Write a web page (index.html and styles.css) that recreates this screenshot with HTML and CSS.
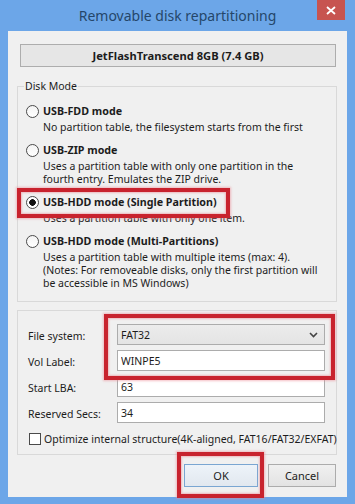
FILE: index.html
```html
<!DOCTYPE html>
<html lang="en">
  <head>
    <meta charset="UTF-8" />
    <meta name="viewport" content="width=device-width, initial-scale=1.0" />
    <title>Removable disk repartitioning</title>
    <link rel="stylesheet" href="styles.css">
  </head>
  <body>
    <div class="window">
      <div class="titlebar">
        <div class="title">Removable disk repartitioning</div>
        <button class="close" aria-label="Close">
          <svg width="10" height="9" viewBox="0 0 10 9">
            <path d="M1 1 L9 8 M9 1 L1 8" stroke="#fff" stroke-width="1.8" fill="none" />
          </svg>
        </button>
      </div>

      <div class="client">
        <div class="device">JetFlashTranscend 8GB (7.4 GB)</div>

        <fieldset class="group modes">
          <legend>Disk Mode</legend>
          <div class="option">
            <label class="radio"><input type="radio" name="mode" /> USB-FDD mode</label>
            <p class="desc">No partition table, the filesystem starts from the first</p>
          </div>
          <div class="option">
            <label class="radio"><input type="radio" name="mode" /> USB-ZIP mode</label>
            <p class="desc">Uses a partition table with only one partition in the<br />fourth entry. Emulates the ZIP drive.</p>
          </div>
          <div class="option">
            <label class="radio"><input type="radio" name="mode" checked /> USB-HDD mode (Single Partition)</label>
            <p class="desc">Uses a partition table with only one item.</p>
          </div>
          <div class="option">
            <label class="radio"><input type="radio" name="mode" /> USB-HDD mode (Multi-Partitions)</label>
            <p class="desc">Uses a partition table with multiple items (max: 4).<br />(Notes: For removeable disks, only the first partition will<br />be accessible in MS Windows)</p>
          </div>
        </fieldset>

        <fieldset class="group params">
          <div class="field">
            <label>File system:</label>
            <div class="select">
              <span>FAT32</span>
              <svg width="9" height="6" viewBox="0 0 9 6">
                <path d="M1 1 L4.5 4.5 L8 1" stroke="#444" stroke-width="1.6" fill="none" />
              </svg>
            </div>
          </div>
          <div class="field">
            <label>Vol Label:</label>
            <input type="text" value="WINPE5" />
          </div>
          <div class="field">
            <label>Start LBA:</label>
            <input type="text" value="63" />
          </div>
          <div class="field">
            <label>Reserved Secs:</label>
            <input type="text" value="34" />
          </div>
          <label class="check"><input type="checkbox" /> Optimize internal structure(4K-aligned, FAT16/FAT32/EXFAT)</label>
        </fieldset>

        <div class="actions">
          <button class="btn default">OK</button>
          <button class="btn cancel">Cancel</button>
        </div>

        <!-- red highlight marks drawn over the dialog -->
        <div class="mark mark-mode"></div>
        <div class="mark mark-fs"></div>
        <div class="mark mark-ok"></div>
      </div>
    </div>
  </body>
</html>
```
FILE: styles.css
```css
* {
  box-sizing: border-box;
}

body {
  margin: 0;
  font-family: "Noto Sans", "Open Sans", sans-serif;
  font-size: 10.5px;
  color: #1c1c1c;
  background-color: #6ca6e8;
}

.window {
  width: 355px;
  height: 504px;
  display: flex;
  flex-direction: column;
  background-color: #6ca6e8;
}

.titlebar {
  height: 31px;
  display: grid;
  grid-template-columns: 1fr auto 1fr;
  align-items: start;
}

.title {
  grid-column: 2;
  font-size: 14px;
  line-height: 31px;
  color: #25466a;
  white-space: nowrap;
}

.close {
  grid-column: 3;
  justify-self: end;
  margin-right: 10px;
  width: 28px;
  height: 20px;
  border: none;
  padding: 0;
  background-color: #c75450;
  display: flex;
  align-items: center;
  justify-content: center;
}

.client {
  position: relative;
  flex: 1;
  margin: 0 8px 7px 8px;
  padding: 13px 10px 0 9px;
  background-color: #f0f0f0;
}

.device {
  margin-left: 3px;
  width: 316px;
  height: 23px;
  border: 1px solid #adadad;
  background-color: #e6e6e6;
  font-size: 11.2px;
  font-weight: 700;
  line-height: 21px;
  text-align: center;
}

.group {
  margin: 0;
  border: 1px solid #d9d9d9;
  min-width: 0;
}

.modes {
  margin-top: 12px;
  padding: 10px 12px 11px 8px;
}

.modes legend {
  margin-left: -2px;
  padding: 0 1px;
  line-height: 14px;
}

.option + .option {
  margin-top: 8px;
}

.radio {
  display: flex;
  align-items: center;
  gap: 4px;
  height: 16px;
  font-weight: 700;
  font-size: 10.7px;
  white-space: nowrap;
}

.radio input {
  appearance: none;
  flex-shrink: 0;
  margin: 0;
  width: 13px;
  height: 13px;
  border: 1px solid #4a4a4a;
  border-radius: 50%;
  background: linear-gradient(#f4f4f4, #ffffff);
}

.radio input:checked {
  background: radial-gradient(circle, #111 0 3px, #fff 3.6px);
}

.desc {
  margin: 2px 0 0 17px;
  line-height: 13px;
  white-space: nowrap;
}

.params {
  margin-top: 8px;
  padding: 13px 11px 6px 10px;
}

.field {
  display: grid;
  grid-template-columns: 89px 208px;
  align-items: center;
  height: 21px;
}

.field + .field {
  margin-top: 5px;
}

.field label {
  padding-top: 2px;
}

.field input,
.select {
  height: 21px;
  margin: 0;
  padding: 0 3px;
  font: inherit;
  color: inherit;
  border: 1px solid #acacac;
}

.field input {
  background-color: #fff;
}

.select {
  display: flex;
  align-items: center;
  justify-content: space-between;
  padding-right: 6px;
  background: linear-gradient(#ececec, #e4e4e4);
}

.check {
  display: flex;
  align-items: center;
  gap: 3px;
  margin-top: 7px;
  margin-left: 1px;
  height: 18px;
  white-space: nowrap;
}

.check input {
  appearance: none;
  flex-shrink: 0;
  margin: 0;
  width: 12px;
  height: 12px;
  border: 1px solid #4a4a4a;
  background-color: #fff;
}

.actions {
  display: flex;
  justify-content: flex-end;
  gap: 10px;
  margin-top: 9px;
  margin-right: 1px;
}

.btn {
  height: 23px;
  padding: 0;
  font: inherit;
  font-size: 11px;
  color: inherit;
  border: 1px solid #acacac;
  background: linear-gradient(#f0f0f0, #e3e3e3);
}

.btn.default {
  width: 74px;
  border-color: #7aa6d2;
  background: linear-gradient(#edf3f9, #e2e8ef);
}

.btn.cancel {
  width: 68px;
}

.mark {
  position: absolute;
  border: 4px solid #c8232e;
  box-shadow: 0 0 2px 1px rgba(236, 140, 150, 0.55), inset 0 0 2px 1px rgba(236, 140, 150, 0.55);
}

.mark-mode {
  left: 9px;
  top: 157px;
  width: 213px;
  height: 30px;
}

.mark-fs {
  left: 96px;
  top: 283px;
  width: 231px;
  height: 66px;
}

.mark-ok {
  left: 169px;
  top: 421px;
  width: 87px;
  height: 46px;
}
```
